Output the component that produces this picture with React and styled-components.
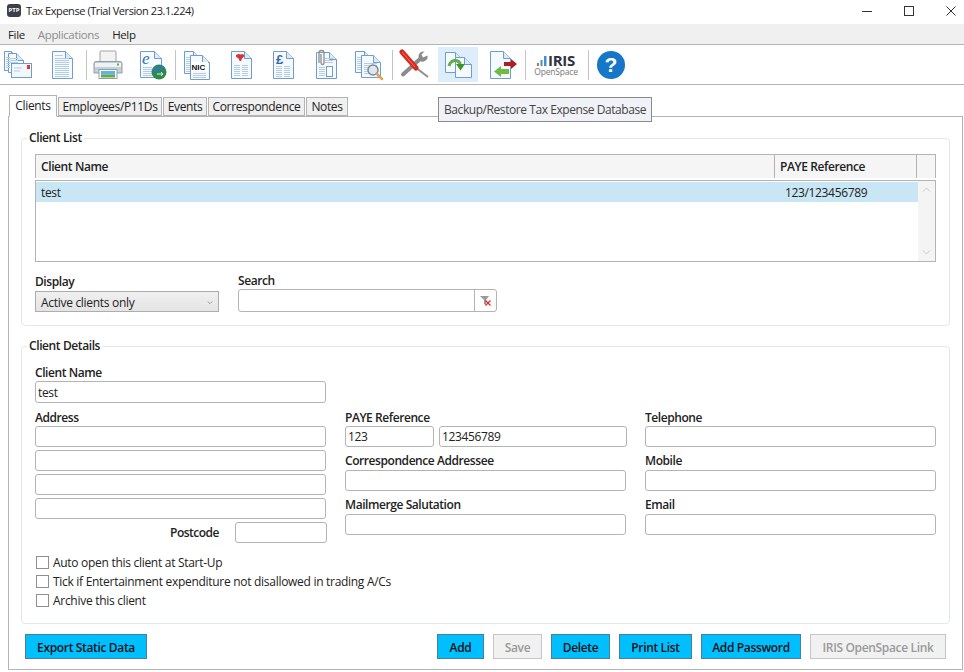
import React from "react";
import styled, { createGlobalStyle } from "styled-components";

const Global = createGlobalStyle`
	html, body {
		margin: 0;
		padding: 0;
		background: #fff;
	}
	body {
		font-family: "Open Sans", "Noto Sans", sans-serif;
		font-size: 12px;
		color: #222;
	}
`;

const Window = styled.div`
	position: relative;
	width: 964px;
	height: 672px;
	overflow: hidden;
	background: #fff;
`;

const TitleBar = styled.div`
	height: 24px;
	display: flex;
	align-items: center;
	padding: 0 8px 3px 7px;
	box-sizing: border-box;
`;

const AppBadge = styled.div`
	width: 14px;
	height: 13px;
	margin-right: 5px;
	border-radius: 3px;
	background: #3c4048;
	color: #fff;
	font-size: 6px;
	font-weight: 700;
	line-height: 13px;
	text-align: center;
`;

const TitleText = styled.span`
	flex: 1;
	font-size: 11px;
	letter-spacing: -0.43px;
`;

const WinButtons = styled.div`
	display: flex;
	gap: 32px;

	svg {
		display: block;
		width: 10px;
		height: 10px;
	}
`;

const MenuBar = styled.div`
	height: 21px;
	box-sizing: border-box;
	display: flex;
	align-items: center;
	gap: 13px;
	padding-left: 8px;
	font-size: 11.5px;
	background: #f0f0f0;
	border-bottom: 1px solid #b4b4b4;
`;

const MenuItem = styled.span`
	letter-spacing: -0.35px;
	color: ${(p) => (p.$off ? "#8c8c8c" : "#222")};
`;

const Toolbar = styled.div`
	height: 40px;
	box-sizing: border-box;
	display: flex;
	align-items: center;
	border-bottom: 1px solid #b4b4b4;
`;

const ToolButton = styled.div`
	width: ${(p) => p.$w || 40}px;
	height: 35px;
	margin-right: ${(p) => p.$gap ?? 3}px;
	display: flex;
	align-items: center;
	justify-content: center;
	background: ${(p) => (p.$hot ? "#deedfa" : "transparent")};

	svg {
		display: block;
	}
`;

const ToolSep = styled.div`
	width: 1px;
	height: 30px;
	margin-right: ${(p) => p.$after ?? 2}px;
	background: #c4c4c4;
`;

const IrisLogo = styled.div`
	display: flex;
	flex-direction: column;
	align-items: center;
	line-height: 1;
`;

const IrisTop = styled.div`
	display: flex;
	align-items: center;
	gap: 1px;
	font-size: 15px;
	font-weight: 700;
	letter-spacing: -0.3px;
	color: #2f3440;
`;

const IrisSub = styled.div`
	font-size: 8.5px;
	letter-spacing: -0.2px;
	color: #777;
`;

const TabArea = styled.div`
	padding: 10px 1px 0 8px;
`;

const TabRow = styled.div`
	position: relative;
	z-index: 1;
	display: flex;
	align-items: flex-end;
	height: 22px;
	padding-left: 1px;
	margin-bottom: -1px;
`;

const Tab = styled.div`
	width: ${(p) => p.$w}px;
	box-sizing: border-box;
	text-align: center;
	letter-spacing: -0.35px;
	border: 1px solid #b4b4b4;
	margin-right: 1px;
	height: ${(p) => (p.$active ? 22 : 19)}px;
	line-height: ${(p) => (p.$active ? 20 : 17)}px;
	margin-bottom: ${(p) => (p.$active ? 0 : 1)}px;
	background: ${(p) => (p.$active ? "#fff" : "#f0f0f0")};
	border-bottom: ${(p) => (p.$active ? "1px solid #fff" : "1px solid #b4b4b4")};
`;

const Panel = styled.div`
	height: 554px;
	box-sizing: border-box;
	padding: 13px 12px 0 12px;
	border: 1px solid #b4b4b4;
`;

const Group = styled.fieldset`
	margin: 0 0 12px;
	padding: ${(p) => p.$pad};
	min-width: 0;
	border: 1px solid #e2e9ef;
	border-radius: 4px;
`;

const Legend = styled.legend`
	margin-left: -8px;
	padding: 0 2px;
	height: 16px;
	line-height: 16px;
	font-weight: 600;
	letter-spacing: -0.4px;
`;

const HeaderRow = styled.div`
	display: flex;
	height: 24px;
`;

const HeaderCell = styled.div`
	width: ${(p) => p.$w}px;
	box-sizing: border-box;
	padding-left: 5px;
	line-height: 24px;
	font-weight: 600;
	letter-spacing: -0.4px;
	background: #f5f5f5;
	border: 1px solid #b4b4b4;
	border-left-width: ${(p) => (p.$first ? 1 : 0)}px;
	border-bottom: 0;
`;

const ListBox = styled.div`
	display: flex;
	height: 82px;
	margin-top: 2px;
	box-sizing: border-box;
	border: 1px solid #b4b4b4;
`;

const ListRows = styled.div`
	flex: 1;
	padding-top: 1px;
`;

const ListRow = styled.div`
	display: flex;
	height: 20px;
	line-height: 22px;
	letter-spacing: -0.35px;
	background: #c9e6f5;
`;

const ListCell = styled.div`
	width: ${(p) => p.$w}px;
	padding-left: ${(p) => p.$pad}px;
	box-sizing: border-box;
`;

const ScrollTrack = styled.div`
	width: 17px;
	display: flex;
	flex-direction: column;
	justify-content: space-between;
	align-items: center;
	padding: 6px 0;
	box-sizing: border-box;
	background: #f4f4f4;
`;

const FilterRow = styled.div`
	display: flex;
	align-items: flex-end;
	gap: 19px;
	margin-top: 10px;
`;

const FilterCol = styled.div`
	width: ${(p) => p.$w}px;
`;

const Label = styled.div`
	height: 16px;
	line-height: 18px;
	margin-bottom: ${(p) => p.$gap ?? 1}px;
	font-weight: 600;
	letter-spacing: -0.43px;
`;

const SelectBox = styled.div`
	height: 21px;
	display: flex;
	align-items: center;
	justify-content: space-between;
	padding: 2px 5px 0;
	box-sizing: border-box;
	letter-spacing: -0.3px;
	background: linear-gradient(#f0f0f0, #e4e4e4);
	border: 1px solid #adadad;
`;

const SearchBox = styled.div`
	display: flex;
	height: 23px;
	box-sizing: border-box;
	border: 1px solid #b4b4b4;
	border-radius: 3px;
`;

const SearchInput = styled.div`
	flex: 1;
	border-right: 1px solid #b4b4b4;
`;

const SearchBtn = styled.div`
	width: 21px;
	display: flex;
	align-items: center;
	justify-content: center;
`;

const TextBox = styled.input`
	display: block;
	width: ${(p) => (p.$w ? `${p.$w}px` : "100%")};
	height: ${(p) => p.$h || 21}px;
	box-sizing: border-box;
	flex: none;
	margin: 0;
	padding: 0 2px;
	font: inherit;
	letter-spacing: -0.35px;
	color: #222;
	background: #fff;
	border: 1px solid #b4b4b4;
	border-radius: 3px;
	outline: none;
`;

const TopField = styled.div`
	width: 291px;
	margin: 10px 0 6px;
`;

const FieldGrid = styled.div`
	display: grid;
	grid-template-columns: 291px 281px 291px;
	column-gap: 19px;
`;

const Col = styled.div`
	display: flex;
	flex-direction: column;
	gap: ${(p) => p.$gap}px;
`;

const PayeRow = styled.div`
	display: flex;
	gap: 5px;
`;

const PostRow = styled.div`
	display: flex;
	align-items: center;
	justify-content: flex-end;
	gap: 16px;
	margin-right: -1px;
`;

const PostLabel = styled.span`
	font-weight: 600;
	letter-spacing: -0.5px;
`;

const Checks = styled.div`
	margin-top: 10px;
`;

const CheckRow = styled.label`
	display: flex;
	align-items: center;
	height: 19px;
	gap: 4px;
	letter-spacing: -0.29px;
`;

const CheckBox = styled.span`
	width: 13px;
	height: 13px;
	margin-left: 1px;
	box-sizing: border-box;
	background: #fff;
	border: 1px solid #8f8f8f;
`;

const Footer = styled.div`
	display: flex;
	gap: 9px;
	margin: -2px 3px 0 4px;
`;

const ActionButton = styled.div`
	width: ${(p) => p.$w}px;
	height: 25px;
	margin-right: ${(p) => p.$push || 0}px;
	box-sizing: border-box;
	text-align: center;
	line-height: 25px;
	font-weight: 600;
	letter-spacing: -0.35px;
	color: ${(p) => (p.$off ? "#9a9a9a" : "#111")};
	background: ${(p) => (p.$off ? "#f1f1f1" : "#00bfff")};
	border: 1px solid ${(p) => (p.$off ? "#c6c6c6" : "#4b7f97")};
`;

const Tooltip = styled.div`
	position: absolute;
	left: 438px;
	top: 97px;
	width: 214px;
	height: 25px;
	box-sizing: border-box;
	padding-left: 5px;
	line-height: 23px;
	letter-spacing: -0.43px;
	color: #444;
	background: #f1f2f7;
	border: 1px solid #8a8a8a;
`;

const BLUE = "#6f9dcf";
const LINE = "#b4cce5";

// sheet of paper with a folded corner
const Sheet = ({ x = 0, y = 0, w = 20, h = 28 }) => (
	<g>
		<path
			d={`M${x + 0.5} ${y + 0.5}h${w - 7}l7 7v${h - 8}h-${w}z`}
			fill="#f6f9fd"
			stroke={BLUE}
		/>
		<path d={`M${x + w - 6.5} ${y + 0.5}v7h7`} fill="#dce9f6" stroke={BLUE} />
	</g>
);

const Lines = ({ x, y, w, n, step = 2 }) => (
	<g stroke={LINE}>
		{Array.from({ length: n }).map((_, i) => (
			<path key={i} d={`M${x} ${y + i * step + 0.5}h${w}`} />
		))}
	</g>
);

const Icon = ({ children }) => (
	<svg width="32" height="32" viewBox="0 0 32 32">
		{children}
	</svg>
);

const MailDocs = () => (
	<Icon>
		<g transform="translate(-2 0)">
			<Sheet x={2} y={2} w={14} h={20} />
			<Sheet x={6} y={4} w={15} h={20} />
			<Lines x={4} y={8} w={4} n={6} />
			<Lines x={8} y={9} w={8} n={3} />
			<rect x="9.5" y="14.5" width="20" height="14" fill="#f2f7fc" stroke={BLUE} />
			<path d="M12 19h8M12 22h6" stroke={LINE} />
			<rect x="25" y="16" width="3" height="4" fill="#e0392f" />
		</g>
	</Icon>
);

const PlainDoc = () => (
	<Icon>
		<Sheet x={6} y={2} w={20} h={28} />
		<Lines x={9} y={9} w={14} n={10} />
		<Lines x={9} y={6} w={8} n={1} />
	</Icon>
);

const Printer = () => (
	<Icon>
		<rect x="8" y="2" width="16" height="11" rx="1" fill="#f3f3f3" stroke="#a3a3a3" />
		<path d="M4 12.5h24a2 2 0 0 1 2 2V24H2v-9.5a2 2 0 0 1 2-2z" fill="#c5cfd6" stroke="#929da5" />
		<rect x="3" y="14" width="26" height="4" fill="#eef2f4" />
		<rect x="25" y="14.5" width="2" height="2" fill="#59b14c" />
		<rect x="7" y="20.5" width="18" height="9" fill="#fff" stroke="#929da5" />
		<rect x="9" y="22" width="14" height="3.5" fill="#59b5e6" />
		<rect x="9" y="25.5" width="14" height="3" fill="#67a948" />
	</Icon>
);

const WebDoc = () => (
	<Icon>
		<Sheet x={3} y={2} w={21} h={27} />
		<text x="5" y="15" fontFamily="Liberation Serif" fontStyle="italic" fontSize="17" fill="#2f74b5">
			e
		</text>
		<Lines x={6} y={18} w={9} n={5} />
		<circle cx="22" cy="23" r="7.5" fill="#2e8a4c" />
		<path d="M16 20c3-3 7-4 11-2l-2 3-4-1-2 3-3 1z" fill="#2f79b9" />
		<path d="M20 25h6m-2-2 2 2-2 2" fill="none" stroke="#e8f4ea" />
	</Icon>
);

const NicDocs = () => (
	<Icon>
		<Sheet x={3} y={2} w={16} h={23} />
		<Lines x={5} y={8} w={11} n={8} />
		<Sheet x={9} y={6} w={19} h={25} />
		<Lines x={12} y={24} w={13} n={3} />
		<rect x="10" y="13" width="17" height="9" fill="#fff" />
		<text x="10.500" y="21" fontFamily="Liberation Sans" fontWeight="700" fontSize="8" fill="#111">
			NIC
		</text>
	</Icon>
);

const SealDoc = () => (
	<Icon>
		<Sheet x={6} y={2} w={20} h={28} />
		<path d="M11 6l2.500-1 2.500.5 2-.5 1.500 2-2.500 2.500-1 2.500h-1.500l-.5-2-3-2.500z" fill="#d8323c" />
		<Lines x={9} y={16} w={6} n={6} />
		<Lines x={17} y={16} w={6} n={6} />
	</Icon>
);

const PoundDoc = () => (
	<Icon>
		<Sheet x={6} y={2} w={20} h={28} />
		<text x="9" y="15" fontFamily="Liberation Sans" fontWeight="700" fontSize="13" fill="#2f6aa8">
			£
		</text>
		<Lines x={9} y={17} w={6} n={6} />
		<Lines x={17} y={17} w={6} n={6} />
	</Icon>
);

const ClipDoc = () => (
	<Icon>
		<Sheet x={6} y={3} w={20} h={27} />
		<Lines x={15} y={9} w={8} n={3} />
		<Lines x={9} y={18} w={6} n={5} />
		<rect x="16.500" y="17.500" width="6" height="10" fill="#fff" stroke={BLUE} />
		<path d="M9 14V4a2.500 2.500 0 0 1 5 0v10a1.500 1.500 0 0 1-3 0V5" fill="none" stroke="#8d8d8d" strokeWidth="1.3" />
	</Icon>
);

const SearchDocs = () => (
	<Icon>
		<Sheet x={2} y={2} w={16} h={22} />
		<Lines x={4} y={8} w={11} n={7} />
		<Sheet x={8} y={6} w={19} h={23} />
		<Lines x={11} y={14} w={13} n={6} />
		<circle cx="20" cy="21" r="5" fill="#dfe7ee" stroke="#7d8a96" strokeWidth="1.500" />
		<path d="M24 25l5 5" stroke="#e2a24e" strokeWidth="2.500" strokeLinecap="round" />
	</Icon>
);

const Tools = () => (
	<Icon>
		<path d="M5 25.500 22 10" stroke="#8b8b8b" strokeWidth="4" strokeLinecap="round" />
		<path d="M29.500 6.500a5 5 0 0 1-8 5l-1-4a5 5 0 0 1 6-5l-3 3 1.500 3z" fill="#8b8b8b" />
		<path d="M17 18l13 10" stroke="#8f8f8f" strokeWidth="2" />
		<path d="M4 3l14 16" stroke="#d8291f" strokeWidth="5" strokeLinecap="round" />
		<path d="M4 3l13 15" stroke="#ef7568" />
	</Icon>
);

const BackupDocs = () => (
	<Icon>
		<Sheet x={3} y={3} w={17} h={21} />
		<Sheet x={13} y={8} w={16} h={21} />
		<path d="M7 17C9 10 16 10 18.500 15" fill="none" stroke="#5fae45" strokeWidth="3" />
		<path d="M14 15h9l-4.500 6.500z" fill="#3f9430" />
	</Icon>
);

const ExportDoc = () => (
	<Icon>
		<Sheet x={4} y={2} w={20} h={28} />
		<path d="M18 13h7v-3l6 5-6 5v-3h-7z" fill="#b01e24" />
		<path d="M23 20h-8v-3l-7 5.500 7 5.500v-3h8z" fill="#6ebc45" />
	</Icon>
);

const HelpIcon = () => (
	<svg width="30" height="30" viewBox="0 0 30 30">
		<circle cx="15" cy="15" r="14" fill="#1677c8" />
		<text x="15" y="22" textAnchor="middle" fontFamily="Liberation Sans" fontWeight="700" fontSize="21" fill="#fff">
			?
		</text>
	</svg>
);

const IrisBars = () => (
	<svg width="10" height="11" viewBox="0 0 10 11">
		<rect x="0" y="8" width="2" height="3" fill="#e8622c" />
		<rect x="3.500" y="5" width="2" height="6" fill="#3f8fd2" />
		<rect x="7" y="1" width="2.500" height="10" fill="#3f8fd2" />
	</svg>
);

const Chevron = ({ up, size = 9, color = "#777" }) => (
	<svg width={size} height={size * 0.6} viewBox="0 0 9 5.400">
		<path d={up ? "M1 4.500l3.500-3.500 3.500 3.500" : "M1 .5l3.500 3.500 3.500-3.500"} fill="none" stroke={color} />
	</svg>
);

const FilterClear = () => (
	<svg width="13" height="13" viewBox="0 0 13 13">
		<path d="M1 2h9L7 6v5L5 10V6z" fill="#9a9a9a" />
		<path d="M6.500 6.500l5 5m0-5l-5 5" stroke="#d8331f" strokeWidth="1.300" />
	</svg>
);

const App = () => {
	return (
		<Window>
			<Global />
			<TitleBar>
				<AppBadge>PTP</AppBadge>
				<TitleText>Tax Expense (Trial Version 23.1.224)</TitleText>
				<WinButtons>
					<svg viewBox="0 0 10 10"><path d="M0 5.500h10" stroke="#333" /></svg>
					<svg viewBox="0 0 10 10"><rect x=".5" y=".5" width="9" height="9" fill="none" stroke="#333" /></svg>
					<svg viewBox="0 0 10 10"><path d="M.5.5l9 9m0-9l-9 9" stroke="#333" /></svg>
				</WinButtons>
			</TitleBar>
			<MenuBar>
				<MenuItem>File</MenuItem>
				<MenuItem $off>Applications</MenuItem>
				<MenuItem>Help</MenuItem>
			</MenuBar>
			<Toolbar>
				<ToolButton $gap={2}><MailDocs /></ToolButton>
				<ToolButton $gap={4}><PlainDoc /></ToolButton>
				<ToolSep $after={1} />
				<ToolButton $gap={5}><Printer /></ToolButton>
				<ToolButton $gap={2}><WebDoc /></ToolButton>
				<ToolSep $after={1} />
				<ToolButton $gap={4}><NicDocs /></ToolButton>
				<ToolButton $gap={2}><SealDoc /></ToolButton>
				<ToolButton><PoundDoc /></ToolButton>
				<ToolButton><ClipDoc /></ToolButton>
				<ToolButton><SearchDocs /></ToolButton>
				<ToolSep $after={1} />
				<ToolButton $gap={4}><Tools /></ToolButton>
				<ToolButton $hot $gap={4}><BackupDocs /></ToolButton>
				<ToolButton $gap={3}><ExportDoc /></ToolButton>
				<ToolSep $after={0} />
				<ToolButton $w={60} $gap={2}>
					<IrisLogo>
						<IrisTop><IrisBars />IRIS</IrisTop>
						<IrisSub>OpenSpace</IrisSub>
					</IrisLogo>
				</ToolButton>
				<ToolSep />
				<ToolButton><HelpIcon /></ToolButton>
			</Toolbar>
			<TabArea>
				<TabRow>
					<Tab $active $w={48}>Clients</Tab>
					<Tab $w={104}>Employees/P11Ds</Tab>
					<Tab $w={44}>Events</Tab>
					<Tab $w={97}>Correspondence</Tab>
					<Tab $w={42}>Notes</Tab>
				</TabRow>
				<Panel>
					<Group $pad="8px 13px 13px">
						<Legend>Client List</Legend>
						<HeaderRow>
							<HeaderCell $first $w={740}>Client Name</HeaderCell>
							<HeaderCell $w={142}>PAYE Reference</HeaderCell>
							<HeaderCell $w={19} />
						</HeaderRow>
						<ListBox>
							<ListRows>
								<ListRow>
									<ListCell $w={739} $pad={5}>test</ListCell>
									<ListCell $w={140} $pad={10}>123/123456789</ListCell>
								</ListRow>
							</ListRows>
							<ScrollTrack>
								<Chevron up color="#ccc" />
								<Chevron color="#ccc" />
							</ScrollTrack>
						</ListBox>
						<FilterRow>
							<FilterCol $w={184}>
								<Label $gap={2}>Display</Label>
								<SelectBox>
									Active clients only
									<Chevron size={6} />
								</SelectBox>
							</FilterCol>
							<FilterCol $w={259}>
								<Label>Search</Label>
								<SearchBox>
									<SearchInput />
									<SearchBtn><FilterClear /></SearchBtn>
								</SearchBox>
							</FilterCol>
						</FilterRow>
					</Group>
					<Group $pad="0 13px 13px">
						<Legend>Client Details</Legend>
						<TopField>
							<Label>Client Name</Label>
							<TextBox $h={22} readOnly defaultValue="test" />
						</TopField>
						<FieldGrid>
							<Col $gap={3}>
								<Label $gap={-2}>Address</Label>
								<TextBox readOnly />
								<TextBox readOnly />
								<TextBox readOnly />
								<TextBox readOnly />
								<PostRow>
									<PostLabel>Postcode</PostLabel>
									<TextBox $w={92} readOnly />
								</PostRow>
							</Col>
							<Col $gap={5}>
								<div>
									<Label>PAYE Reference</Label>
									<PayeRow>
										<TextBox $w={89} readOnly defaultValue="123" />
										<TextBox $w={188} readOnly defaultValue="123456789" />
									</PayeRow>
								</div>
								<div>
									<Label $gap={2}>Correspondence Addressee</Label>
									<TextBox readOnly />
								</div>
								<div>
									<Label $gap={2}>Mailmerge Salutation</Label>
									<TextBox readOnly />
								</div>
							</Col>
							<Col $gap={5}>
								<div>
									<Label>Telephone</Label>
									<TextBox readOnly />
								</div>
								<div>
									<Label $gap={2}>Mobile</Label>
									<TextBox readOnly />
								</div>
								<div>
									<Label $gap={2}>Email</Label>
									<TextBox readOnly />
								</div>
							</Col>
						</FieldGrid>
						<Checks>
							<CheckRow><CheckBox />Auto open this client at Start-Up</CheckRow>
							<CheckRow><CheckBox />Tick if Entertainment expenditure not disallowed in trading A/Cs</CheckRow>
							<CheckRow><CheckBox />Archive this client</CheckRow>
						</Checks>
					</Group>
					<Footer>
						<ActionButton $w={122} $push={281}>Export Static Data</ActionButton>
						<ActionButton $w={47}>Add</ActionButton>
						<ActionButton $w={49} $off>Save</ActionButton>
						<ActionButton $w={59}>Delete</ActionButton>
						<ActionButton $w={73}>Print List</ActionButton>
						<ActionButton $w={100}>Add Password</ActionButton>
						<ActionButton $w={136} $off>IRIS OpenSpace Link</ActionButton>
					</Footer>
				</Panel>
			</TabArea>
			<Tooltip>Backup/Restore Tax Expense Database</Tooltip>
		</Window>
	);
};

export default App;
